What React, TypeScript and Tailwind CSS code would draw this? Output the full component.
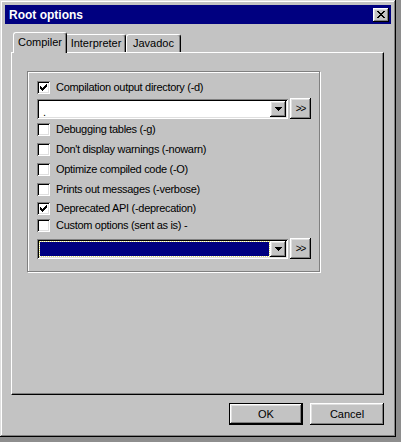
const raised =
  "bg-[#c3c3c3] shadow-[inset_-1px_-1px_#000,inset_1px_1px_#fff,inset_-2px_-2px_#808080,inset_2px_2px_#dfdfdf]";
const sunken =
  "shadow-[inset_1px_1px_#808080,inset_-1px_-1px_#fff,inset_2px_2px_#000,inset_-2px_-2px_#dfdfdf]";

function CheckMark() {
  return (
    <svg width="7" height="7" viewBox="0 0 7 7" shapeRendering="crispEdges">
      <path
        d="M0 2h1v3H0z M1 3h1v3H1z M2 4h1v3H2z M3 3h1v3H3z M4 2h1v3H4z M5 1h1v3H5z M6 0h1v3H6z"
        fill="#000"
      />
    </svg>
  );
}

function Checkbox({ checked }: { checked?: boolean }) {
  return (
    <div className={`w-[13px] h-[13px] bg-white flex items-center justify-center shrink-0 ${sunken}`}>
      {checked && <CheckMark />}
    </div>
  );
}

function Arrow() {
  return (
    <svg width="7" height="4" viewBox="0 0 7 4" shapeRendering="crispEdges">
      <path d="M0 0h7v1H0z M1 1h5v1H1z M2 2h3v1H2z M3 3h1v1H3z" fill="#000" />
    </svg>
  );
}

function Combo({ value, selected }: { value?: string; selected?: boolean }) {
  return (
    <div className="flex items-center gap-[2px]">
      <div className={`w-[251px] h-[20px] bg-white flex items-stretch p-[2px] ${sunken}`}>
        {selected ? (
          <div className="flex-1 my-[1px] ml-[1px] mr-[1px] bg-[#000080] outline outline-1 outline-dotted outline-[#d8d870]" />
        ) : (
          <div className="flex-1 pl-[4px] pt-[3px] text-[11px] leading-[16px] text-black">{value}</div>
        )}
        <div className={`w-[16px] flex items-center justify-center ${raised}`}>
          <Arrow />
        </div>
      </div>
      <div className={`w-[21px] h-[21px] flex items-center justify-center text-[10px] tracking-[-1px] ${raised}`}>
        &gt;&gt;
      </div>
    </div>
  );
}

function Row({ label, checked, h }: { label: string; checked?: boolean; h: string }) {
  return (
    <div className={`flex items-center gap-[6px] ${h}`}>
      <Checkbox checked={checked} />
      <span className="text-[11px] tracking-[-0.3px] text-black whitespace-nowrap">{label}</span>
    </div>
  );
}

export default function App() {
  return (
    <div className="w-[401px] h-[442px] bg-[#8e8e8e] font-['Liberation_Sans',Arial,sans-serif]">
      <div className="w-[396px] h-[437px] bg-[#c3c3c3] p-[5px] flex flex-col shadow-[inset_-1px_-1px_#000,inset_1px_1px_#dfdfdf,inset_-2px_-2px_#808080,inset_2px_2px_#fff]">
        {/* title bar */}
        <div className="h-[19px] bg-[#000080] flex items-center justify-between pl-[4px] pr-[2px]">
          <span className="text-white font-bold text-[12px]">Root options</span>
          <div className={`w-[16px] h-[14px] flex items-center justify-center ${raised}`}>
            <svg width="8" height="7" viewBox="0 0 8 7" shapeRendering="crispEdges">
              <path
                d="M0 0h2v1H0z M6 0h2v1H6z M1 1h2v1H1z M5 1h2v1H5z M2 2h4v1H2z M3 3h2v1H3z M2 4h4v1H2z M1 5h2v1H1z M5 5h2v1H5z M0 6h2v1H0z M6 6h2v1H6z"
                fill="#000"
              />
            </svg>
          </div>
        </div>

        {/* tabs */}
        <div className="flex items-end h-[20px] mt-[8px] ml-[8px]">
          <div className="relative z-10 -mb-[1px] w-[54px] h-[21px] bg-[#c3c3c3] border-t border-l border-r border-white border-r-black rounded-t-[3px] shadow-[inset_-1px_0_#808080] flex items-center justify-center text-[11px] pb-[1px]">
            Compiler
          </div>
          <div className="w-[59px] h-[18px] border-t border-r border-white border-r-black rounded-tr-[3px] shadow-[inset_-1px_0_#808080] flex items-center justify-center text-[11px]">
            Interpreter
          </div>
          <div className="w-[55px] h-[18px] border-t border-l border-r border-white border-r-black rounded-t-[3px] shadow-[inset_-1px_0_#808080] flex items-center justify-center text-[11px]">
            Javadoc
          </div>
        </div>

        {/* panel */}
        <div className="ml-[6px] w-[373px] h-[343px] border-t border-l border-white border-r border-b border-r-black border-b-black shadow-[inset_-1px_-1px_#808080] pt-[18px] pl-[15px]">
          <div className="w-[293px] h-[201px] border border-[#808080] shadow-[1px_1px_0_#fff,inset_1px_1px_0_#fff] pt-[5px] pl-[9px]">
            <Row label="Compilation output directory (-d)" checked h="h-[20px]" />
            <div className="mt-[1px]">
              <Combo value="." />
            </div>
            <Row label="Debugging tables (-g)" h="h-[20px]" />
            <Row label="Don't display warnings (-nowarn)" h="h-[20px]" />
            <Row label="Optimize compiled code (-O)" h="h-[20px]" />
            <Row label="Prints out messages (-verbose)" h="h-[20px]" />
            <Row label="Deprecated API (-deprecation)" checked h="h-[18px]" />
            <Row label="Custom options (sent as is) -" h="h-[16px]" />
            <div className="mt-[5px]">
              <Combo selected />
            </div>
          </div>
        </div>

        {/* buttons */}
        <div className="ml-[6px] w-[373px] mt-[8px] flex justify-end gap-[7px]">
          <div className="w-[74px] h-[22px] border border-black">
            <div className={`w-full h-full flex items-center justify-center text-[11px] ${raised}`}>OK</div>
          </div>
          <div className={`w-[74px] h-[22px] flex items-center justify-center text-[11px] ${raised}`}>Cancel</div>
        </div>
      </div>
    </div>
  );
}
